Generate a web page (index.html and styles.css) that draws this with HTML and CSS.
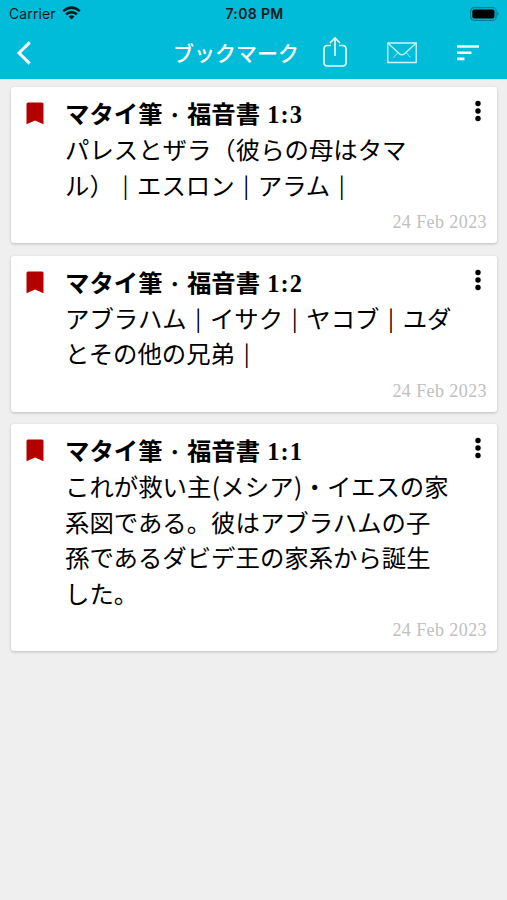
FILE: index.html
```html
<!DOCTYPE html>
<html lang="ja">
<head>
<meta charset="utf-8">
<title>ブックマーク</title>
<link rel="stylesheet" href="styles.css">
</head>
<body>
<header class="top">
  <div class="status">
    <div class="carrier"><span>Carrier</span>
      <svg width="19" height="14" viewBox="0 0 19 14"><g fill="none" stroke="#05191c" stroke-width="2.5"><path d="M1.2 5.1Q9.5-1.9 17.8 5.1"/><path d="M4.1 8.3Q9.5 3.9 14.9 8.3"/></g><path d="M6.5 10.4Q9.5 8 12.5 10.4L9.5 13.5Z" fill="#05191c"/></svg>
    </div>
    <span class="clock">7:08 PM</span>
    <svg class="battery" width="30" height="14" viewBox="0 0 30 14"><rect x=".7" y=".7" width="25.4" height="12.6" rx="3.5" fill="none" stroke="#057f8d" stroke-width="1.2"/><rect x="2.3" y="2.4" width="22.2" height="9.2" rx="2" fill="#000"/><path d="M27.3 4.8Q30 7 27.3 9.2Z" fill="#057f8d"/></svg>
  </div>
  <nav class="bar">
    <svg class="back" width="16" height="26" viewBox="0 0 16 26"><path d="M13.7 2.4 3.1 13 13.7 23.6" fill="none" stroke="#fff" stroke-width="3"/></svg>
    <h1>ブックマーク</h1>
    <svg class="share" width="26" height="32" viewBox="0 0 26 32"><g fill="none" stroke="#e6fbff" stroke-width="1.7"><path d="M9 9.500H5.500Q2 9.500 2 13V26.500Q2 30 5.500 30H20.500Q24 30 24 26.500V13Q24 9.500 20.500 9.500H17"/><path d="M13 20V2M8 7 13 2 18 7"/></g></svg>
    <svg class="mail" width="30" height="22" viewBox="0 0 30 22"><g fill="none" stroke="#c9f5fb" stroke-width="1.300"><path d="M.8 1H29.200V20.500H.8Z"/><path d="M1 1.300 12.500 11.800Q15 14 17.500 11.800L29 1.300"/><path d="M6.500 15.500 11 10.500M23.500 15.500 19 10.500" stroke-width=".8"/></g></svg>
    <svg class="sort" width="24" height="18" viewBox="0 0 24 18"><path d="M1 2.500H23M1 8.700H15.500M1 14.900H8.500" fill="none" stroke="#e6fbff" stroke-width="2.600"/></svg>
  </nav>
</header>
<main class="list">
  <article class="card">
    <svg class="mark" viewBox="0 0 18 23"><path d="M2 .5H16Q17.500.5 17.500 2V22.300L9 18.500.5 22.300V2Q.5.5 2 .5Z"/></svg>
    <div class="content">
      <h2>マタイ筆<span class="dot">・</span>福音書<span class="verse">1:3</span></h2>
      <p>パレスとザラ（彼らの母はタマ<br>ル）<i>|</i>エスロン<i>|</i>アラム<i>|</i></p>
    </div>
    <svg class="more" width="6" height="22" viewBox="0 0 6 22"><circle cx="3" cy="3.500" r="2.700"/><circle cx="3" cy="11" r="2.700"/><circle cx="3" cy="18.500" r="2.700"/></svg>
    <time>24 Feb 2023</time>
  </article>
  <article class="card">
    <svg class="mark" viewBox="0 0 18 23"><path d="M2 .5H16Q17.500.5 17.500 2V22.300L9 18.500.5 22.300V2Q.5.5 2 .5Z"/></svg>
    <div class="content">
      <h2>マタイ筆<span class="dot">・</span>福音書<span class="verse">1:2</span></h2>
      <p>アブラハム<i>|</i>イサク<i>|</i>ヤコブ<i>|</i>ユダ<br>とその他の兄弟<i>|</i></p>
    </div>
    <svg class="more" width="6" height="22" viewBox="0 0 6 22"><circle cx="3" cy="3.500" r="2.700"/><circle cx="3" cy="11" r="2.700"/><circle cx="3" cy="18.500" r="2.700"/></svg>
    <time>24 Feb 2023</time>
  </article>
  <article class="card">
    <svg class="mark" viewBox="0 0 18 23"><path d="M2 .5H16Q17.500.5 17.500 2V22.300L9 18.500.5 22.300V2Q.5.5 2 .5Z"/></svg>
    <div class="content">
      <h2>マタイ筆<span class="dot">・</span>福音書<span class="verse">1:1</span></h2>
      <p>これが救い主<span class="paren">(</span>メシア<span class="paren">)</span>・イエスの家<br>系図である。彼はアブラハムの子<br>孫であるダビデ王の家系から誕生<br>した。</p>
    </div>
    <svg class="more" width="6" height="22" viewBox="0 0 6 22"><circle cx="3" cy="3.500" r="2.700"/><circle cx="3" cy="11" r="2.700"/><circle cx="3" cy="18.500" r="2.700"/></svg>
    <time>24 Feb 2023</time>
  </article>
</main>
</body>
</html>
```
FILE: styles.css
```css
* { box-sizing: border-box; }
body {
  margin: 0;
  min-height: 900px;
  background: #efefef;
  color: #000;
  font-family: "Noto Sans CJK JP", sans-serif;
}
svg { display: block; flex: none; }
.top { height: 79px; background: #00bcd9; }
.status {
  height: 27px;
  padding: 0 7px 0 9px;
  display: grid;
  grid-template-columns: 1fr auto 1fr;
  align-items: center;
  font: 14px/27px Inter, sans-serif;
  color: #05191c;
}
.carrier { display: flex; align-items: center; gap: 6px; letter-spacing: .1px; }
.carrier svg { margin-top: -1px; }
.clock { font-weight: 600; font-size: 14px; letter-spacing: .35px; }
.battery { justify-self: end; }
.bar { height: 52px; display: flex; align-items: center; padding-left: 16px; }
.back { margin-top: -1px; }
.bar h1 {
  margin: -3px 0 0 141px;
  width: 126px;
  font-size: 21px;
  line-height: 52px;
  font-weight: 500;
  color: #fff;
  white-space: nowrap;
}
.share { margin: -2px 0 0 23px; }
.mail { margin-left: 39px; }
.sort { margin-left: 38.5px; }
.list { padding: 8px 10px 0 11px; display: flex; flex-direction: column; gap: 12.5px; }
.card {
  display: grid;
  grid-template-columns: 39px 1fr 6px;
  padding: 8px 16px 8px 15px;
  background: #fff;
  border-radius: 3px;
  box-shadow: 0 1px 3px rgba(0, 0, 0, .22);
}
.mark { width: 18px; height: 23px; margin-top: 7px; fill: #b40000; }
.more { margin-top: 5px; fill: #000; }
.content { white-space: nowrap; }
h2, p { margin: 0; font-size: 24.4px; line-height: 35.5px; }
h2 { font-weight: 700; height: 36px; }
p { font-weight: 400; }
p i {
  display: inline-block;
  width: 23.2px;
  text-align: center;
  font-style: normal;
  font-size: 22px;
  line-height: 1;
  vertical-align: 1px;
}
.dot {
  display: inline-block;
  width: 24.4px;
  text-align: center;
  font-size: 20px;
  font-weight: 400;
  line-height: 1;
}
.verse { margin-left: 7px; font-family: "Liberation Serif", serif; letter-spacing: 1.1px; }
.paren { display: inline-block; width: 9px; line-height: 1; text-align: center; }
time {
  grid-column: 1 / -1;
  justify-self: end;
  margin-right: -6px;
  height: 33px;
  font: 18px/40px "Liberation Serif", serif;
  letter-spacing: .42px;
  color: #c0c0c0;
}
```
